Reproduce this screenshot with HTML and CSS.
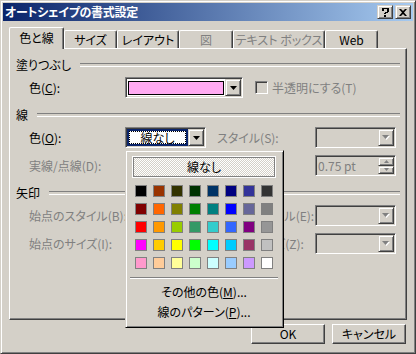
FILE: index.html
```html
<!DOCTYPE html>
<html lang="ja">
    <head>
        <meta charset="UTF-8" />
        <title>オートシェイプの書式設定</title>
        <link rel="stylesheet" href="styles.css">
    </head>
    <body>
        <div class="window">
            <div class="titlebar">
                <span class="title">オートシェイプの書式設定</span>
                <span class="caps">
                    <span class="cap-btn raised">
                        <svg width="7" height="9" viewBox="0 0 7 9"><path d="M0 0h7v1H0zM0 1h2v2H0zM5 1h2v3H5zM3 4h3v1H3zM2 5h2v1H2zM2 7h2v2H2z" fill="#000"/></svg>
                    </span>
                    <span class="cap-btn raised">
                        <svg width="8" height="7" viewBox="0 0 8 7"><path d="M0 0h2l2 2 2-2h2L5 3.5 8 7H6L4 5 2 7H0l3-3.5z" fill="#000"/></svg>
                    </span>
                </span>
            </div>
            <div class="body">
                <div class="tabs">
                    <div class="tab active" style="width:55px">色と線</div>
                    <div class="tab" style="width:53px">サイズ</div>
                    <div class="tab" style="width:62px">レイアウト</div>
                    <div class="tab dis" style="width:54px">図</div>
                    <div class="tab dis" style="width:92px">テキスト ボックス</div>
                    <div class="tab" style="width:53px">Web</div>
                </div>
                <div class="panel">
                    <div class="group"><span>塗りつぶし</span></div>
                    <div class="row">
                        <span class="lbl">色(<u>C</u>):</span>
                        <div class="combo wide">
                            <div class="field fill"><span class="pink"></span></div>
                            <span class="drop raised"><svg width="7" height="4" viewBox="0 0 7 4"><polygon points="0,0 7,0 3.5,4" fill="#000"/></svg></span>
                        </div>
                        <span class="check"></span>
                        <span class="txt dis">半透明にする(T)</span>
                    </div>

                    <div class="group"><span>線</span></div>
                    <div class="row">
                        <span class="lbl">色(<u>O</u>):</span>
                        <div class="combo">
                            <div class="field sel"><span class="sel-in">線なし</span></div>
                            <span class="drop raised"><svg width="7" height="4" viewBox="0 0 7 4"><polygon points="0,0 7,0 3.5,4" fill="#000"/></svg></span>
                        </div>
                        <span class="lbl2 dis">スタイル(S):</span>
                        <div class="combo off">
                            <div class="field"></div>
                            <span class="drop raised"><svg width="8" height="5" viewBox="0 0 8 5"><polygon points="1,1 8,1 4.5,5" fill="#fff"/><polygon points="0,0 7,0 3.5,4" fill="#808080"/></svg></span>
                        </div>
                    </div>
                    <div class="row">
                        <span class="lbl dis">実線/点線(D):</span>
                        <div class="combo off">
                            <div class="field"></div>
                            <span class="drop raised"></span>
                        </div>
                        <span class="lbl2"></span>
                        <div class="combo off">
                            <div class="field num dis">0.75 pt</div>
                            <span class="spin">
                                <span class="spin-btn raised"><svg width="5" height="3" viewBox="0 0 5 3"><polygon points="2.5,0 5,3 0,3" fill="#808080"/></svg></span>
                                <span class="spin-btn raised"><svg width="5" height="3" viewBox="0 0 5 3"><polygon points="0,0 5,0 2.5,3" fill="#808080"/></svg></span>
                            </span>
                        </div>
                    </div>

                    <div class="group"><span>矢印</span></div>
                    <div class="row">
                        <span class="lbl dis">始点のスタイル(B):</span>
                        <div class="combo off">
                            <div class="field"></div>
                            <span class="drop raised"></span>
                        </div>
                        <span class="lbl2 dis">終点のスタイル(E):</span>
                        <div class="combo off">
                            <div class="field"></div>
                            <span class="drop raised"><svg width="8" height="5" viewBox="0 0 8 5"><polygon points="1,1 8,1 4.5,5" fill="#fff"/><polygon points="0,0 7,0 3.5,4" fill="#808080"/></svg></span>
                        </div>
                    </div>
                    <div class="row">
                        <span class="lbl dis">始点のサイズ(I):</span>
                        <div class="combo off">
                            <div class="field"></div>
                            <span class="drop raised"></span>
                        </div>
                        <span class="lbl2 dis">終点のサイズ(Z):</span>
                        <div class="combo off">
                            <div class="field"></div>
                            <span class="drop raised"><svg width="8" height="5" viewBox="0 0 8 5"><polygon points="1,1 8,1 4.5,5" fill="#fff"/><polygon points="0,0 7,0 3.5,4" fill="#808080"/></svg></span>
                        </div>
                    </div>
                </div>
                <div class="buttons">
                    <span class="btn">OK</span>
                    <span class="btn">キャンセル</span>
                </div>
            </div>

            <div class="popup">
                <div class="none-btn">線なし</div>
                <div class="swatches">
                    <span class="sw" style="background:#000000"></span>
                    <span class="sw" style="background:#993300"></span>
                    <span class="sw" style="background:#333300"></span>
                    <span class="sw" style="background:#003300"></span>
                    <span class="sw" style="background:#003366"></span>
                    <span class="sw" style="background:#000080"></span>
                    <span class="sw" style="background:#333399"></span>
                    <span class="sw" style="background:#333333"></span>
                    <span class="sw" style="background:#800000"></span>
                    <span class="sw" style="background:#ff6600"></span>
                    <span class="sw" style="background:#808000"></span>
                    <span class="sw" style="background:#008000"></span>
                    <span class="sw" style="background:#008080"></span>
                    <span class="sw" style="background:#0000ff"></span>
                    <span class="sw" style="background:#666699"></span>
                    <span class="sw" style="background:#808080"></span>
                    <span class="sw" style="background:#ff0000"></span>
                    <span class="sw" style="background:#ff9900"></span>
                    <span class="sw" style="background:#99cc00"></span>
                    <span class="sw" style="background:#339966"></span>
                    <span class="sw" style="background:#33cccc"></span>
                    <span class="sw" style="background:#3366ff"></span>
                    <span class="sw" style="background:#800080"></span>
                    <span class="sw" style="background:#969696"></span>
                    <span class="sw" style="background:#ff00ff"></span>
                    <span class="sw" style="background:#ffcc00"></span>
                    <span class="sw" style="background:#ffff00"></span>
                    <span class="sw" style="background:#00ff00"></span>
                    <span class="sw" style="background:#00ffff"></span>
                    <span class="sw" style="background:#00ccff"></span>
                    <span class="sw" style="background:#993366"></span>
                    <span class="sw" style="background:#c0c0c0"></span>
                    <span class="sw" style="background:#ff99cc"></span>
                    <span class="sw" style="background:#ffcc99"></span>
                    <span class="sw" style="background:#ffff99"></span>
                    <span class="sw" style="background:#ccffcc"></span>
                    <span class="sw" style="background:#ccffff"></span>
                    <span class="sw" style="background:#99ccff"></span>
                    <span class="sw" style="background:#cc99ff"></span>
                    <span class="sw" style="background:#ffffff"></span>
                </div>
                <div class="sep"></div>
                <div class="mi">その他の色(<u>M</u>)...</div>
                <div class="mi">線のパターン(<u>P</u>)...</div>
            </div>
        </div>
    </body>
</html>
```

FILE: styles.css
```css
* {
    margin: 0;
    padding: 0;
    box-sizing: border-box;
}
body {
    width: 416px;
    height: 354px;
    overflow: hidden;
    background: #d4d0c8;
    color: #000;
    font-family: "Noto Sans CJK JP", "Liberation Sans", sans-serif;
    font-size: 12px;
    font-feature-settings: "palt";
    line-height: 1;
}
u {
    text-decoration: underline;
    text-underline-offset: 1px;
}
.dis {
    color: #808080;
}
.raised {
    background: #d4d0c8;
    border: 1px solid;
    border-color: #d4d0c8 #404040 #404040 #d4d0c8;
    box-shadow: inset 1px 1px #fff, inset -1px -1px #808080;
}

/* window frame */
.window {
    position: relative;
    width: 416px;
    height: 354px;
    background: #d4d0c8;
    border: 1px solid;
    border-color: #d4d0c8 #404040 #404040 #d4d0c8;
    box-shadow: inset 1px 1px #fff, inset -1px -1px #808080;
    padding: 2px;
}
.titlebar {
    height: 18px;
    display: flex;
    align-items: center;
    justify-content: space-between;
    padding: 0 2px 0 2px;
    background: linear-gradient(to right, #0a246a, #a6caf0);
}
.title {
    color: #fff;
    font-weight: bold;
    font-size: 12px;
    letter-spacing: -0.3px;
}
.caps {
    display: flex;
    gap: 2px;
}
.cap-btn {
    width: 16px;
    height: 14px;
    display: flex;
    align-items: center;
    justify-content: center;
}

/* tabs */
.body {
    padding: 6px 6px 0 6px;
}
.tabs {
    position: relative;
    z-index: 1;
    display: flex;
    align-items: flex-end;
    height: 21px;
}
.tab {
    height: 18px;
    display: flex;
    align-items: center;
    justify-content: center;
    background: #d4d0c8;
    border: 1px solid;
    border-bottom: none;
    border-color: #fff #404040 #404040 #fff;
    border-radius: 2px 2px 0 0;
    box-shadow: inset -1px 0 #808080;
    padding-top: 1px;
}
.tab.active {
    height: 22px;
    margin-bottom: -1px;
    padding-top: 0;
    padding-bottom: 2px;
}
.panel {
    position: relative;
    height: 272px;
    border: 1px solid;
    border-color: #fff #404040 #404040 #fff;
    box-shadow: inset -1px -1px #808080;
    padding-top: 8px;
}

/* group headers */
.group {
    display: flex;
    align-items: center;
    height: 16px;
    padding: 0 6px;
}
.group::after {
    content: "";
    flex: 1;
    height: 2px;
    margin-left: 9px;
    border-top: 1px solid #808080;
    border-bottom: 1px solid #fff;
}
.row + .group {
    margin-top: 9px;
}
.group + .row {
    margin-top: 4px;
}
.row + .row {
    margin-top: 7px;
}

/* form rows */
.row {
    display: flex;
    align-items: center;
    height: 21px;
    padding-left: 19px;
}
.lbl {
    width: 96px;
    white-space: nowrap;
}
.lbl2 {
    width: 98px;
    margin-left: 11px;
    white-space: nowrap;
}
.combo {
    width: 81px;
    height: 21px;
    display: flex;
    padding: 1px;
    border: 1px solid;
    border-color: #808080 #fff #fff #808080;
    box-shadow: inset 1px 1px #404040, inset -1px -1px #d4d0c8;
    background: #fff;
}
.combo.wide {
    width: 118px;
}
.combo.off {
    background: #d4d0c8;
}
.field {
    flex: 1;
    display: flex;
}
.drop {
    width: 16px;
    height: 17px;
    display: flex;
    align-items: center;
    justify-content: center;
}
.fill {
    padding: 2px 1px 1px 1px;
}
.pink {
    flex: 1;
    border: 1px solid #000;
    background: #ffaaf2;
}
.sel {
    background: #0a246a;
    padding: 2px;
}
.sel-in {
    flex: 1;
    display: flex;
    align-items: center;
    justify-content: center;
    background: #fff;
    border: 1px dotted #000;
}
.num {
    align-items: center;
    padding-left: 1px;
}
.spin {
    width: 16px;
    display: flex;
    flex-direction: column;
}
.spin-btn {
    flex: 1;
    display: flex;
    align-items: center;
    justify-content: center;
}
.check {
    width: 13px;
    height: 13px;
    margin-left: 12px;
    border: 1px solid;
    border-color: #808080 #fff #fff #808080;
    box-shadow: inset 1px 1px #404040, inset -1px -1px #d4d0c8;
}
.txt {
    margin-left: 4px;
}

/* dialog buttons */
.buttons {
    display: flex;
    justify-content: flex-end;
    gap: 7px;
    margin-top: 4px;
    padding-right: 1px;
}
.btn {
    width: 74px;
    height: 20px;
    display: flex;
    align-items: center;
    justify-content: center;
    border: 1px solid;
    border-color: #fff #404040 #404040 #fff;
    box-shadow: inset -1px -1px #808080;
}

/* colour drop-down */
.popup {
    position: absolute;
    left: 124px;
    top: 149px;
    z-index: 5;
    width: 159px;
    height: 178px;
    padding: 6px 8px 0 7px;
    background: #d4d0c8;
    border: 1px solid;
    border-color: #d4d0c8 #000 #000 #d4d0c8;
    box-shadow: inset 1px 1px #fff, inset -1px -1px #808080;
}
.none-btn {
    height: 20px;
    display: flex;
    align-items: center;
    justify-content: center;
    border: 1px solid #808080;
    box-shadow: 0 0 0 1px #fff;
    background-color: #fff;
    background-image: repeating-conic-gradient(#d4d0c8 0 25%, #fff 0 50%);
    background-size: 2px 2px;
}
.swatches {
    display: grid;
    grid-template-columns: repeat(8, 12px);
    gap: 6px;
    margin: 8px 0 0 2px;
}
.sw {
    width: 12px;
    height: 12px;
    border: 1px solid #808080;
}
.sep {
    height: 2px;
    margin: 8px -3px 0 -3px;
    border-top: 1px solid #808080;
    border-bottom: 1px solid #fff;
}
.mi {
    height: 20px;
    display: flex;
    align-items: center;
    justify-content: center;
}
.sep + .mi {
    margin-top: 3px;
}
```
